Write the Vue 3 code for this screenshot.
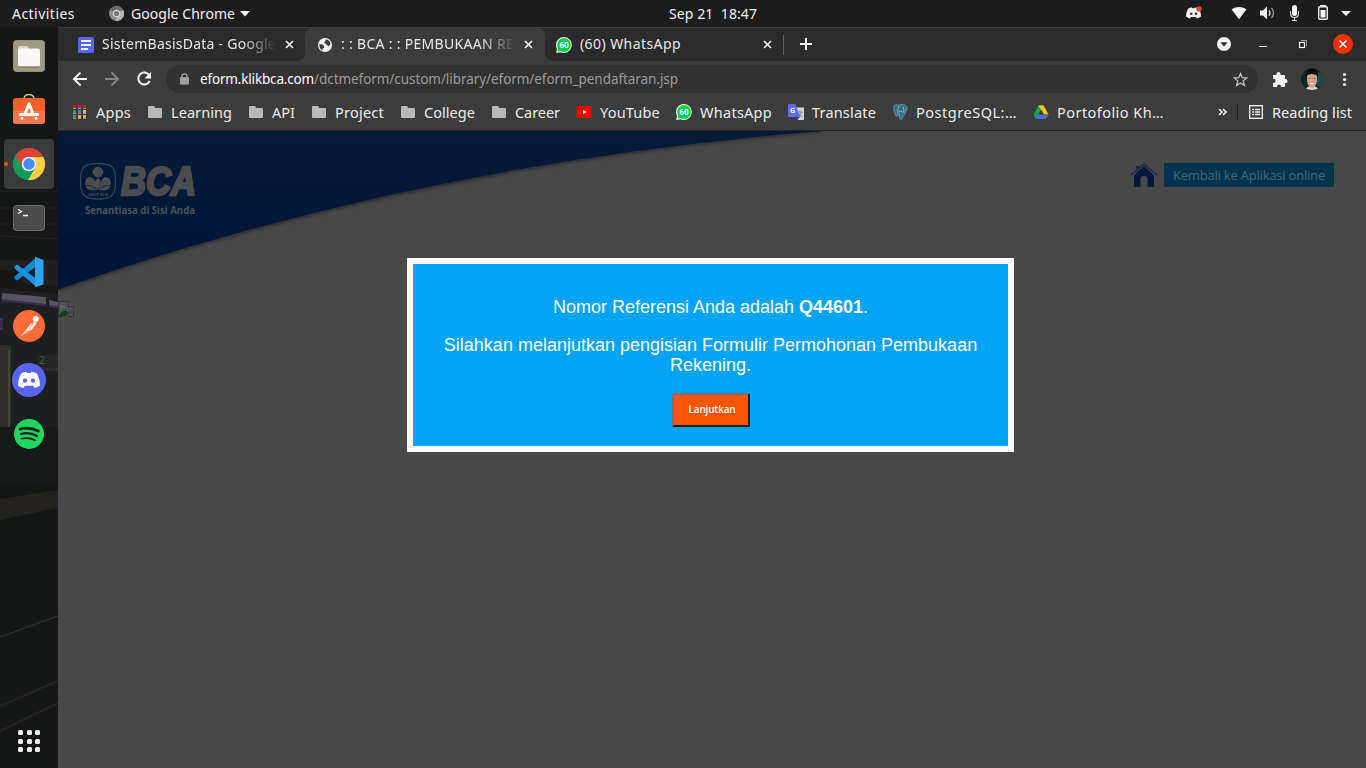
<script setup>
const fit = (el, { value }) => {
  el.style.letterSpacing = '0px'
  const range = document.createRange()
  range.selectNodeContents(el)
  const natural = range.getBoundingClientRect().width
  el.style.letterSpacing = (value - natural) / el.textContent.length + 'px'
}
const vFit = { mounted: fit }

const bookmarks = [
  { icon: 'apps', label: 'Apps', w: 35 },
  { icon: 'folder', label: 'Learning', w: 61 },
  { icon: 'folder', label: 'API', w: 23 },
  { icon: 'folder', label: 'Project', w: 49 },
  { icon: 'folder', label: 'College', w: 51 },
  { icon: 'folder', label: 'Career', w: 45 },
  { icon: 'youtube', label: 'YouTube', w: 60 },
  { icon: 'whatsapp', label: 'WhatsApp', w: 72 },
  { icon: 'translate', label: 'Translate', w: 64 },
  { icon: 'postgres', label: 'PostgreSQL:…', w: 101 },
  { icon: 'drive', label: 'Portofolio Kh…', w: 107 },
]
const appColors = ['#f00c2c', '#f00c2c', '#f00c2c', '#10a95a', '#3f7af5', '#fdb40a', '#10a95a', '#fdb40a', '#fdb40a']
const gridDots = [0, 1, 2, 3, 4, 5, 6, 7, 8]
</script>

<template>
  <div class="desktop">
    <header class="topbar">
      <span v-fit="63" class="activities">Activities</span>
      <div class="appmenu">
        <svg width="15" height="15" viewBox="0 0 16 16">
          <circle cx="8" cy="8" r="8" fill="#8b8b8b" />
          <path d="M8 8L1.2 4A8 8 0 0 1 15 4.2z" fill="#6a6a6a" />
          <path d="M8 8l7-4a8 8 0 0 1-7.5 12z" fill="#b5b5b5" />
          <circle cx="8" cy="8" r="4" fill="#d5d5d5" />
          <circle cx="8" cy="8" r="2.8" fill="#777" />
        </svg>
        <span v-fit="104">Google Chrome</span>
        <svg class="menuarrow" width="10" height="6" viewBox="0 0 10 6"><path d="M0 0h10L5 5.5z" fill="#f2f2f2" /></svg>
      </div>
      <span v-fit="88" class="clock">Sep 21&nbsp; 18:47</span>
      <div class="tray">
        <svg width="180" height="27" viewBox="1186 0 180 27" fill="#f2f2f2">
          <path d="M1188 8.8q2-1.3 4-1.3l.5.8h2l.5-.8q2 0 4 1.3q2 3.700 2 7.800q-2 1.700-4 2l-1-1.600h-5l-1 1.600q-2-.3-4-2q0-4.100 2-7.800z" />
          <circle cx="1191.300" cy="13.800" r="1.300" fill="#333" /><circle cx="1196" cy="13.800" r="1.300" fill="#333" />
          <circle cx="1199" cy="9" r="2.700" fill="#e8403d" />
          <path d="M1231.5 9.2q7.5-4.6 15 0L1239 19.2z" />
          <path d="M1260 10.5h3l4-4v13l-4-4h-3z" />
          <path d="M1269 10.3q2 2.700 0 5.400" fill="none" stroke="#ddd" stroke-width="1.300" />
          <path d="M1271.500 8q4 5 0 10" fill="none" stroke="#999" stroke-width="1.300" />
          <rect x="1292" y="5" width="5" height="11" rx="2.500" />
          <path d="M1290.500 11v2.500q0 4 4 4t4-4V11M1294.500 17.500v3M1292 20.500h5" fill="none" stroke="#ddd" stroke-width="1.100" />
          <path d="M1320 5h6v2h-6z" />
          <rect x="1318.700" y="6.700" width="8.600" height="12.600" rx="1" fill="none" stroke="#f2f2f2" stroke-width="1.400" />
          <path d="M1320.500 10h5v7.500h-5z" />
          <path d="M1341 11h10l-5 5z" />
        </svg>
      </div>
    </header>

    <div class="workspace">
      <nav class="dock">
        <svg class="wallpaper" width="58" height="741" viewBox="0 27 58 741">
          <rect y="27" width="58" height="741" fill="#151616" />
          <path d="M0 191h58M0 208h58M0 224h58M0 236l58 3" stroke="#28241d" stroke-width="1" />
          <path d="M0 260h58v220H0z" fill="#1d1f21" />
          <path d="M0 270l20 0 4 14 34 2v8L0 288z" fill="#191716" />
          <path d="M2 293l44 4v8l-44-4zM49 300l9 2v6l-9-2z" fill="#58545f" />
          <path d="M2 300l44 5M49 306l9 1" stroke="#3b2b57" stroke-width="2" />
          <path d="M0 318h3v12H0z" fill="#3b2b57" />
          <path d="M0 345h11v82H0z" fill="#302e26" /><path d="M8 350h2v77H8z" fill="#49442f" />
          <path d="M37 355h21v13H37z" fill="#242727" />
          <path d="M0 427h58v57H0z" fill="#171818" />
          <path d="M0 499l58-9v18L0 520z" fill="#23221c" />
          <path d="M0 637l58-21" stroke="#33332f" stroke-width="1" />
          <path d="M0 706l58-25M0 731l58-28" stroke="#222220" stroke-width="2" />
          <text x="39" y="364" class="sign">2</text>
          <text x="40" y="371" class="signsmall" textLength="18" lengthAdjust="spacingAndGlyphs">Avenue</text>
        </svg>
        <div class="slot">
          <svg width="32" height="32" viewBox="0 0 32 32">
            <rect width="32" height="32" rx="4" fill="#968e7b" /><rect x=".8" y=".8" width="30.4" height="30.4" rx="3.5" fill="#a09986" />
            <path d="M5 8q0-2 2-2h7l2 2v4H5z" fill="#ded9cb" /><rect x="5" y="8.5" width="22" height="18" rx="2" fill="#f8f7f5" />
            <path d="M6 27h20" stroke="#7c7565" />
          </svg>
        </div>
        <div class="slot">
          <svg width="32" height="32" viewBox="0 0 32 32">
            <path d="M11 5.500q0-5 5-5t5 5" fill="none" stroke="#d8c89a" stroke-width="1.400" />
            <rect y="4" width="32" height="26" rx="3" fill="#f1622b" /><path d="M0 17h32v10q0 3-3 3H3q-3 0-3-3z" fill="#f37a48" />
            <path d="M11 22l5-12 5 12" fill="none" stroke="#fff" stroke-width="3" stroke-linejoin="round" />
            <path d="M7.500 20.500h17" stroke="#fff" stroke-width="3" stroke-linecap="round" /><path d="M9.500 23l-1 2.500M22.500 23l1 2.500" stroke="#fff" stroke-width="2.500" />
          </svg>
        </div>
        <div class="slot active">
          <i class="running"></i>
          <svg width="32" height="32" viewBox="0 0 32 32">
            <circle cx="16" cy="16" r="16" fill="#109d59" />
            <path d="M16 16L2.400 7.700A16 16 0 0 1 30.300 8.900z" fill="#dc4437" /><path d="M2.400 7.700L9.500 20l8-10z" fill="#dc4437" />
            <path d="M16 8.900h14.300A16 16 0 0 1 14.800 32L22.400 19.300z" fill="#fecd41" />
            <path d="M2.400 7.700L9.600 19.600 16 23l6.400-3.400L14.800 32A16 16 0 0 1 2.400 7.700z" fill="#109d59" />
            <circle cx="16" cy="16" r="7.300" fill="#f1f3f5" /><circle cx="16" cy="16" r="5.700" fill="#4688f4" />
          </svg>
        </div>
        <div class="slot">
          <svg width="32" height="26" viewBox="0 0 32 26">
            <rect x=".5" y=".5" width="31" height="25" rx="3" fill="#4b4b4b" stroke="#6c6c6c" />
            <path d="M5 4.500l3.500 2L5 8.500M10 10.500h5" fill="none" stroke="#f0f0f0" stroke-width="1.300" />
          </svg>
        </div>
        <div class="slot">
          <svg width="32" height="32" viewBox="0 0 32 32">
            <path d="M1.500 20.500L23 1.500v9L4 24.500 1.500 23z" fill="#1486ce" />
            <path d="M1.500 10.500L4 8.500l19 14v8L1.500 12.500z" fill="#1a91dc" />
            <path d="M22 .8L30.500 4v24.500L22 31.200z" fill="#2ba5ee" />
          </svg>
        </div>
        <div class="slot">
          <svg width="32" height="32" viewBox="0 0 32 32">
            <circle cx="16" cy="16" r="16" fill="#ff6c37" />
            <circle cx="22.700" cy="9" r="3" fill="#fff3ec" /><path d="M21 12l3 1-5.500 7L11 24l-4 3 6-7 4.500-6z" fill="#fff3ec" />
            <path d="M20 13l-4 6M18.500 20L12 22" stroke="#ff8a60" stroke-width=".8" />
          </svg>
        </div>
        <div class="slot">
          <svg width="34" height="34" viewBox="0 0 34 34">
            <circle cx="17" cy="17" r="17" fill="#5865f2" />
            <path d="M9 10.500q3-1.600 5.500-1.700l.8 1.300h3.400l.8-1.300q2.500.1 5.500 1.700 3.200 6 3 12.200-3 2-5.500 2.300l-1.300-2.200h-8.400L11.500 25Q9 24.700 6 22.700q-.2-6.200 3-12.200z" fill="#fff" />
            <circle cx="13" cy="17.600" r="2.200" fill="#5865f2" /><circle cx="21" cy="17.600" r="2.200" fill="#5865f2" />
          </svg>
        </div>
        <div class="slot">
          <svg width="30" height="30" viewBox="0 0 30 30" fill="none" stroke="#17211b" stroke-linecap="round">
            <circle cx="15" cy="15" r="15" fill="#1fd760" stroke="none" />
            <path d="M6 10.200q9.500-2.700 18.500 2" stroke-width="2.700" /><path d="M7 15q8.500-2.300 16 2" stroke-width="2.200" /><path d="M7.500 19.600q7.500-1.700 13.500 1.700" stroke-width="1.800" />
          </svg>
        </div>
        <div class="launcher"><i v-for="d in gridDots" :key="d"></i></div>
      </nav>

      <section class="browser">
        <div class="tabs">
          <div class="tab first">
            <svg width="16" height="16" viewBox="0 0 16 16"><rect width="16" height="16" rx="1.500" fill="#5865f5" /><path d="M3 3h10v2H3zM3 7h10v2H3zM3 11h7v2H3z" fill="#fff" /></svg>
            <div class="title fade"><span v-fit="174">SistemBasisData - Google</span></div>
            <svg class="close" width="9" height="9" viewBox="0 0 9 9"><path d="M1 1l7 7M8 1L1 8" stroke="#eee" stroke-width="1.700" /></svg>
          </div>
          <div class="tab current">
            <svg width="14" height="14" viewBox="0 0 14 14"><circle cx="7" cy="7" r="7" fill="#f2f2f2" /><path d="M1.500 6l3 .5L6 8v2l-1.500.5V12.500Q.8 10.500 1.500 6zM7.500 1.500Q12 1.500 12.500 6L10.500 8.500 9 7 7.500 5.500 6 4.500 7.500 3z" fill="#3c3c3c" /></svg>
            <div class="title fade"><span v-fit="173">: : BCA : : PEMBUKAAN RE</span></div>
            <svg class="close" width="9" height="9" viewBox="0 0 9 9"><path d="M1 1l7 7M8 1L1 8" stroke="#eee" stroke-width="1.700" /></svg>
          </div>
          <div class="tab last">
            <svg width="16" height="16" viewBox="0 0 16 16"><path d="M8 0a8 8 0 1 1-3.500 15.300L.3 16l.6-4.300A8 8 0 0 1 8 0z" fill="#fff" /><circle cx="8" cy="8" r="6.900" fill="#06d240" /><path d="M1.500 14.800l.6-3.800 3 3z" fill="#06d240" /><text x="8" y="11" class="badge">60</text></svg>
            <div class="title"><span v-fit="101">(60) WhatsApp</span></div>
            <svg class="close" width="9" height="9" viewBox="0 0 9 9"><path d="M1 1l7 7M8 1L1 8" stroke="#eee" stroke-width="1.700" /></svg>
          </div>
          <i class="tabsep"></i>
          <svg class="plus" width="12" height="12" viewBox="0 0 12 12"><path d="M6 0v12M0 6h12" stroke="#fff" stroke-width="2" /></svg>
          <div class="controls">
            <svg width="150" height="34" viewBox="1216 27 150 34" fill="none">
              <circle cx="1224" cy="44" r="7" fill="#f5f5f5" /><path d="M1220.500 42.300h7l-3.500 4.500z" fill="#2b2b2b" />
              <path d="M1259 46.500h8" stroke="#f2f2f2" />
              <rect x="1299.500" y="42.500" width="5" height="5" stroke="#fff" stroke-width="1.200" /><path d="M1301 40.500h5.500V46" stroke="#999" />
              <circle cx="1343" cy="44" r="10" fill="#ec3009" /><path d="M1339.500 40.500l7 7M1346.500 40.500l-7 7" stroke="#fff" stroke-width="1.500" />
            </svg>
          </div>
        </div>

        <div class="toolbar">
          <svg width="108" height="36" viewBox="58 61 108 36" fill="none" stroke-width="2">
            <path d="M87 79H74.500M80.500 72.500L74 79l6.500 6.500" stroke="#f5f5f5" />
            <path d="M105 79h12.500M111.500 72.500L118 79l-6.500 6.500" stroke="#858585" />
            <path d="M149.200 75A6 6 0 1 0 149.700 81" stroke="#f5f5f5" /><path d="M151 72v6.500h-6.500z" fill="#f5f5f5" />
          </svg>
          <div class="address">
            <svg width="9" height="12" viewBox="0 0 9 12"><rect y="4" width="9" height="7.500" rx="1" fill="#9ba0a5" /><path d="M2 4V3q0-2 2.500-2T7 3v1" fill="none" stroke="#9ba0a5" stroke-width="1.300" /></svg>
            <div class="url"><span v-fit="114" class="host">eform.klikbca.com</span><span v-fit="364">/dctmeform/custom/library/eform/eform_pendaftaran.jsp</span></div>
            <svg class="star" width="15" height="15" viewBox="0 0 15 15"><path d="M7.500 1.500l1.700 4.200 4.500.3-3.500 2.900 1.200 4.500-3.900-2.500-3.900 2.500 1.200-4.500L1.300 6l4.500-.3z" fill="none" stroke="#c5c5c5" stroke-width="1.200" /></svg>
          </div>
          <svg width="108" height="36" viewBox="1258 61 108 36">
            <path d="M1273 75h3.500v-1a2 2 0 0 1 4 0v1h3.500q1 0 1 1v3h.5a2 2 0 0 1 0 4.200h-.5v3q0 .8-1 .8h-3v-.6a2 2 0 0 0-4 0v.6h-3q-1 0-1-1v-3h.5a2.100 2.100 0 0 0 0-4.200h-.5v-2q0-.8 0-.8z" fill="#f5f5f5" />
            <clipPath id="avatar"><circle cx="1312" cy="79" r="11" /></clipPath>
            <g clip-path="url(#avatar)"><path d="M1301 68h22v22h-22z" fill="#102626" /><path d="M1317 73l6-1v14h-6z" fill="#1b4a48" /><path d="M1305 90q2-4 7-4t7 4z" fill="#d9d5cc" /><path d="M1307 75q5-3 10 0v6q-1 6-5 7-4-1-5-7z" fill="#d4a184" /><path d="M1306 79v-6q2-4 6-4t6 4v6l-1.500-4-4.500-1-4.500 1z" fill="#080c0f" /><path d="M1308.500 78.500h2M1313.500 78.500h2" stroke="#7c5343" stroke-width=".8" /><path d="M1309.500 83h5q-2.500 2.500-5 0z" fill="#fff" /></g>
            <circle cx="1344.500" cy="74.500" r="1.600" fill="#f2f2f2" /><circle cx="1344.500" cy="79.500" r="1.600" fill="#f2f2f2" /><circle cx="1344.500" cy="84.500" r="1.600" fill="#f2f2f2" />
          </svg>
        </div>

        <div class="bookmarks">
          <div v-for="b in bookmarks" :key="b.label" class="bookmark">
            <svg width="16" height="16" viewBox="0 0 16 16">
              <template v-if="b.icon === 'apps'">
                <g v-for="(c, i) in appColors" :key="i"><rect :x="1 + (i % 3) * 5" :y="1 + Math.floor(i / 3) * 5" width="3" height="3.200" :fill="c" /><rect :x="1 + (i % 3) * 5" :y="4.200 + Math.floor(i / 3) * 5" width="3" height=".8" fill="#aaa" /></g>
              </template>
              <path v-else-if="b.icon === 'folder'" d="M1 3q0-1 1-1h5l1.500 2H14q1 0 1 1v8q0 1-1 1H2q-1 0-1-1z" fill="#b9b9b9" />
              <template v-else-if="b.icon === 'youtube'"><rect x=".5" y="2" width="15" height="12" rx="2.500" fill="#f60000" /><path d="M7 6l4 2-4 2z" fill="#fff" /></template>
              <template v-else-if="b.icon === 'whatsapp'"><path d="M8 0a8 8 0 1 1-3.500 15.300L.3 16l.6-4.300A8 8 0 0 1 8 0z" fill="#fff" /><circle cx="8" cy="8" r="6.900" fill="#06d240" /><path d="M1.500 14.800l.6-3.800 3 3z" fill="#06d240" /><text x="8" y="11" class="badge">60</text></template>
              <template v-else-if="b.icon === 'translate'"><path d="M6 3.500h10V15q0 1-1 1H10z" fill="#d4d6d6" /><path d="M9 8h6M12 6.500V8M10 13q3-2 3.500-5M10.500 9q1 3 4 4" stroke="#7f8b96" fill="none" /><path d="M1 0h6.500L12 13H1q-1 0-1-1V1q0-1 1-1z" fill="#5b6cf0" /><path d="M8 13h4l-3 3z" fill="#4632c4" /><text x="4.500" y="9" class="gletter">G</text></template>
              <template v-else-if="b.icon === 'postgres'"><path d="M2 1.500Q4 0 7 1q3-1 6 0 3 1 1.500 5l-2 5q-2 0-2 4-2 1.500-3-.5V10L6 12H4Q.5 6 2 1.500z" fill="#32738c" stroke="#8fa7ad" stroke-width=".6" /><path d="M7 2q-2 3-1 8M11 3q2 3 0 6M7 8q2-2 3 0" fill="none" stroke="#b6c8cd" stroke-width=".7" /></template>
              <template v-else><path d="M5.500 1.500h5l-5 9L3 15 .5 11z" fill="#10a65a" /><path d="M5.500 1.500h5l5 9H11z" fill="#fecc07" /><path d="M5.500 10.500h10L13 15H3z" fill="#4d6af1" /><path d="M12.500 10.500h3L14 13z" fill="#e74133" /><path d="M8 6l2.600 4.500H5.500z" fill="#3c3c3c" /></template>
            </svg>
            <span v-fit="b.w" class="label" :style="{ width: b.w + 'px' }">{{ b.label }}</span>
          </div>
          <div class="overflow">
            <svg width="9" height="8" viewBox="0 0 9 8"><path d="M1 1l3 3-3 3M5 1l3 3-3 3" fill="none" stroke="#eee" stroke-width="1.600" /></svg>
            <i></i>
            <svg width="14" height="14" viewBox="0 0 14 14" fill="none" stroke="#eee"><rect x=".7" y=".7" width="12.600" height="12.600" stroke-width="1.400" /><path d="M3 4.500h2M6 4.500h5M3 7h2M6 7h5M3 9.500h2M6 9.500h5" stroke-width="1.300" /></svg>
            <span v-fit="80">Reading list</span>
          </div>
        </div>

        <main class="page">
          <svg class="hero" width="1308" height="190" viewBox="0 0 1308 190">
            <defs>
              <linearGradient id="navy" x2="0" y2="1"><stop stop-color="#071a38" /><stop offset=".6" stop-color="#011739" /><stop offset="1" stop-color="#001438" /></linearGradient>
              <filter id="soft"><feGaussianBlur stdDeviation="1.500" /></filter>
            </defs>
            <path d="M0 159Q359 33 765 0" fill="none" stroke="#2c2c2c" stroke-width="3" filter="url(#soft)" />
            <path d="M0 158.500Q359 32 765 0H0z" fill="url(#navy)" />
            <g fill="#4b4c4e">
              <path d="M40 32.500C54 32.500 57.500 36 57.500 50S54 68 40 68 22.500 64 22.500 50 26 32.500 40 32.500z" fill="none" stroke="#354252" stroke-width="1.300" />
              <circle cx="40" cy="41" r="5.300" /><path d="M39.500 59q-8 1-10-1-3-3-2-8 1-4 5-4 5 1 7 13zM40.500 59q8 1 10-1 3-3 2-8-1-4-5-4-5 1-7 13zM40 46l3 5-3 8-3-8z" />
              <path d="M38 57.500q-5-4-10-3M42 57.500q5-4 10-3" stroke="#07193a" fill="none" stroke-width=".8" />
              <text x="40" y="65" class="group" textLength="20">GRUP BCA</text>
              <text x="63" y="64" class="bca" textLength="75" lengthAdjust="spacingAndGlyphs">BCA</text>
              <text x="27" y="83" class="tagline" textLength="110" lengthAdjust="spacingAndGlyphs">Senantiasa di Sisi Anda</text>
            </g>
          </svg>
          <div class="back">
            <svg width="26" height="24" viewBox="0 0 26 24"><path d="M3 12L13 3l10 9v12h-6.500v-8q0-3-3.500-3t-3.500 3v8H3z" fill="#02163f" /><path d="M0 12L13 1l13 11" fill="none" stroke="#142544" stroke-width="1.300" /><path d="M5 5.500V3h3v2" fill="#142544" /></svg>
            <div class="backlink"><span v-fit="152">Kembali ke Aplikasi online</span></div>
          </div>
          <svg class="broken" width="16" height="16" viewBox="0 0 16 16"><path d="M.5.500h10l5 5v10H.5z" fill="#4b515c" stroke="#303333" /><path d="M10.500.5v5h5" fill="#555" stroke="#303333" /><path d="M2 5q1-2 3-1l2 1v2H2z" fill="#626262" /><path d="M1 15q3-6 7-5l4 2-4 3z" fill="#0d4512" /><path d="M6 16l10-8v2l-6 6z" fill="#484848" /></svg>
          <section class="dialog">
            <p><span v-fit="315">Nomor Referensi Anda adalah <b>Q44601</b>.</span></p>
            <p>Silahkan melanjutkan pengisian Formulir Permohonan Pembukaan Rekening.</p>
            <button><span v-fit="47">Lanjutkan</span></button>
          </section>
        </main>
      </section>
    </div>
  </div>
</template>

<style>
html, body { margin: 0; overflow: hidden; background: #1d1d1d; }
</style>

<style scoped>
* { box-sizing: border-box; }
svg { display: block; flex: none; }
.desktop { width: 1366px; height: 768px; display: flex; flex-direction: column; overflow: hidden; font-family: "Noto Sans", "Open Sans", sans-serif; font-size: 14px; line-height: 20px; color: #f2f2f2; white-space: nowrap; }
.topbar { height: 27px; background: #1d1d1d; display: grid; grid-template-columns: 97px 572px 1fr 180px; align-items: center; padding-left: 12px; font-size: 14px; }
.appmenu { display: flex; align-items: center; margin-left: 0; }
.appmenu span { width: 105px; margin-left: 7px; }
.menuarrow { margin-left: 4px; }
.clock { margin-left: -12px; }
.workspace { flex: 1; display: flex; min-height: 0; }
.dock { width: 58px; position: relative; display: flex; flex-direction: column; align-items: center; gap: 4px; padding-top: 4px; }
.wallpaper { position: absolute; left: 0; top: 0; }
.sign { font-size: 10px; fill: #565448; }
.signsmall { font-size: 5px; fill: #41413c; }
.slot { position: relative; width: 50px; height: 50px; display: grid; place-items: center; border-radius: 4px; }
.active { background: #3a3b3b; }
.running { position: absolute; left: 0; top: 23px; width: 4px; height: 4px; border-radius: 50%; background: #e95420; }
.launcher { position: relative; margin: auto 0 16px; display: grid; grid-template-columns: repeat(3, 5px); gap: 3.500px; }
.launcher i { width: 5px; height: 5px; border-radius: 1.500px; background: #f4f4f4; }
.browser { width: 1308px; display: flex; flex-direction: column; background: #3c3c3c; }
.tabs { height: 34px; background: #2b2b2b; border-top: 1px solid #3d3d3d; display: flex; align-items: center; }
.tab { height: 33px; display: flex; align-items: center; background: #2b2b2b; }
.title { flex: 1; margin-left: 8px; margin-top: -1px; overflow: hidden; color: #e8e8e8; }
.fade { -webkit-mask-image: linear-gradient(90deg, #000 calc(100% - 34px), transparent); mask-image: linear-gradient(90deg, #000 calc(100% - 34px), transparent); }
.close { margin-top: -1px; }
.first { width: 247px; padding: 0 10px 0 20px; border-radius: 0 0 8px 0; }
.first .title { margin-right: 9px; }
.first .close { margin-right: 1px; }
.current { width: 240px; padding: 0 12px 0 13px; background: #3c3c3c; border-radius: 8px 8px 0 0; }
.current .title { margin-left: 9px; margin-right: 9px; }
.last { width: 238px; padding: 0 11px 0 11px; border-radius: 0 0 0 8px; }
.tabs { background: linear-gradient(#2b2b2b 70%, #3c3c3c 70%) 200px 0 / 100px 100% no-repeat, linear-gradient(#2b2b2b 70%, #3c3c3c 70%) 480px 0 / 40px 100% no-repeat, #2b2b2b; }
.tabsep { width: 1px; height: 20px; background: #626262; }
.plus { margin-left: 16px; margin-top: -1px; }
.controls { margin-left: auto; margin-top: -1px; }
.toolbar { height: 36px; display: flex; }
.address { flex: 1; height: 28px; margin-top: 4px; padding: 0 10px 0 14px; display: flex; align-items: center; background: #323232; border-radius: 14px; }
.url { margin-left: 11px; color: #9b9b9b; font-size: 13.500px; }
.host { color: #fff; }
.star { margin-left: auto; }
.bookmarks { height: 34px; padding: 0 14px 3px 14px; border-bottom: 1px solid #252525; display: flex; align-items: center; gap: 16px; font-size: 14.500px; }
.bookmark { display: flex; align-items: center; gap: 8px; color: #ececec; }
.overflow { margin-left: auto; display: flex; align-items: center; }
.overflow i { width: 1px; height: 16px; background: #222; margin: 0 11px 0 10px; }
.overflow span { margin-left: 9px; }
.badge { font-size: 8px; font-weight: 700; fill: #fff; text-anchor: middle; }
.gletter { font-size: 7px; font-weight: 700; fill: #fff; text-anchor: middle; }
.page { flex: 1; position: relative; background: #484848; overflow: hidden; display: flex; flex-direction: column; align-items: center; }
.hero { position: absolute; left: 0; top: 0; }
.group { font-size: 4px; font-weight: 700; text-anchor: middle; }
.bca { font: italic 700 40px "Liberation Sans", Arial, sans-serif; stroke: #4b4c4e; stroke-width: 2.500; }
.tagline { font: 700 10px "Noto Sans", sans-serif; fill: #48505a; }
.back { position: relative; align-self: flex-end; display: flex; gap: 7px; margin: 32px 32px 0 0; }
.backlink { width: 170px; height: 24px; padding-left: 9px; background: #00344d; color: #4c6673; font: 13px/24px "Open Sans", sans-serif; }
.broken { position: absolute; left: 0; top: 170px; }
.dialog { position: relative; width: 607px; height: 194px; margin: 71px 0 0 -3px; border: 6px solid #fff; background: #03a4f6; padding: 33px 25px 0; text-align: center; white-space: normal; font: 18px/20px "Liberation Sans", Arial, sans-serif; color: #fff; }
.dialog p { margin: 0 0 18px; }
.dialog button { display: block; width: 78px; height: 34px; margin: 0 auto; padding: 0 0 2px 3px; border: 2px solid; border-color: #767676 #212121 #212121 #767676; background: #ff5500; color: #fff; font: 600 10px "Open Sans", "Noto Sans", sans-serif; }
</style>
